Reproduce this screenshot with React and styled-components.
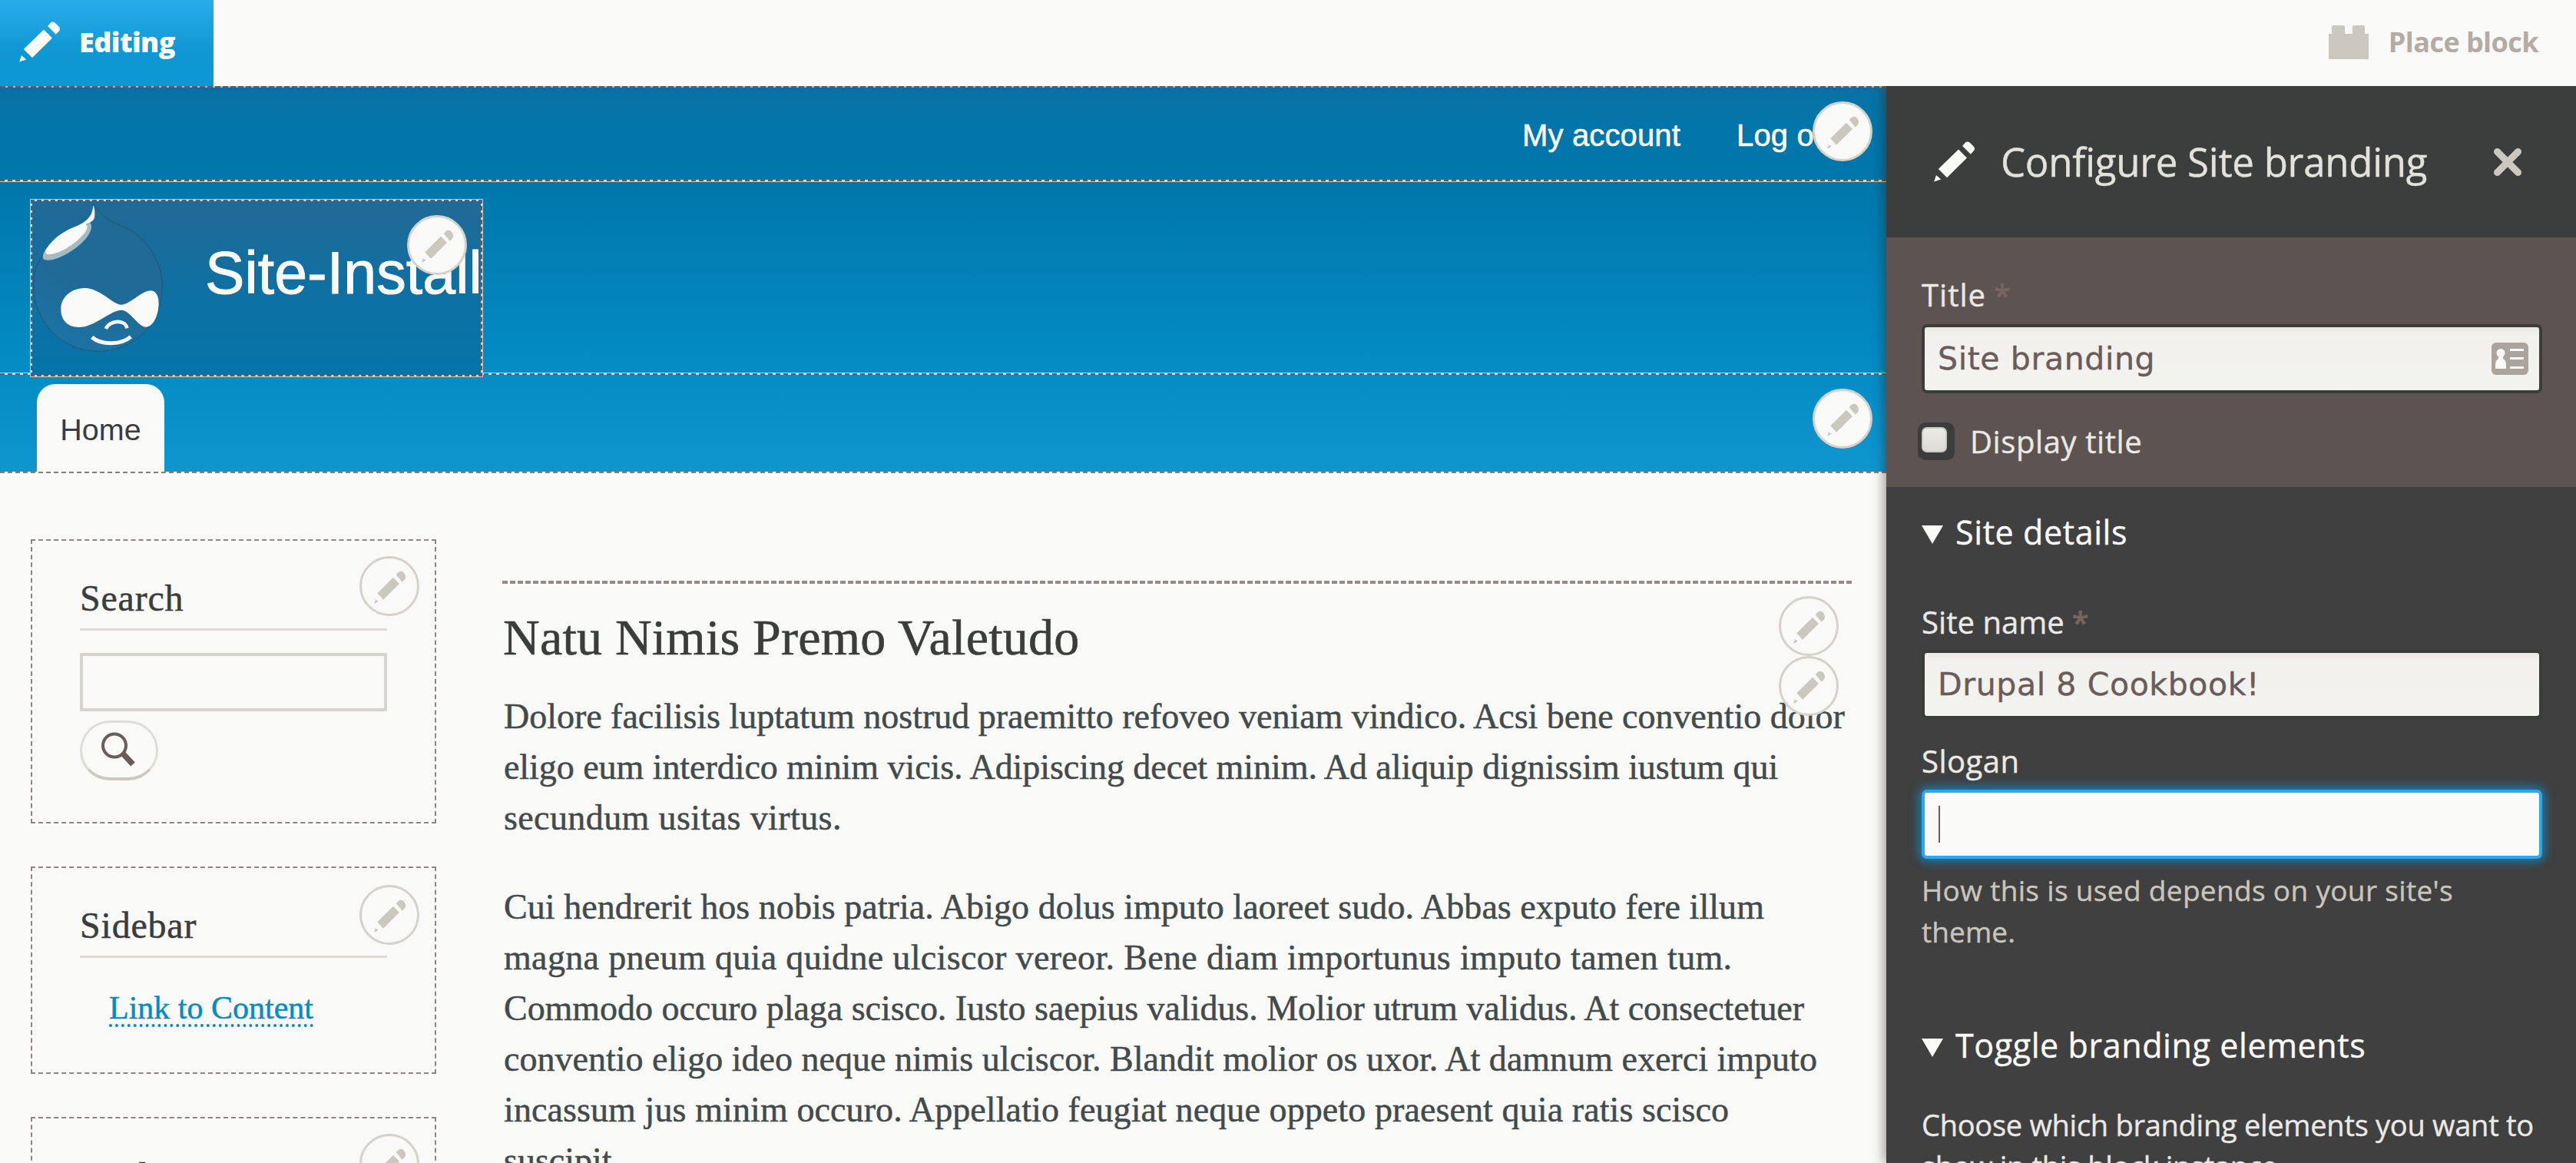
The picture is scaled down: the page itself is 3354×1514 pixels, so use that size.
import React from 'react';
import styled, { createGlobalStyle } from 'styled-components';

const paper = '#f9f9f7';
const stone = '#cbc8bf';
const coal = '#3b3d3c';
const umber = '#6a5c58';
const sans = '"Liberation Sans", Arial, sans-serif';
const serif = '"Liberation Serif", "Times New Roman", serif';
const ui = '"Open Sans", "Noto Sans", sans-serif';
const wide = '"DejaVu Sans", Verdana, sans-serif';

const Global = createGlobalStyle`
  *, *::before, *::after { box-sizing: border-box; }
  body { margin: 0; background: ${paper}; overflow: hidden; }
  h1, h2, h3, p { margin: 0; font-weight: 400; }
`;

const Page = styled.div`
  display: flex;
  flex-direction: column;
  width: 3354px;
  height: 1514px;
  overflow: hidden;
  background: ${paper};
`;

const Toolbar = styled.header`
  display: flex;
  justify-content: space-between;
  flex: none;
  height: 112px;
`;

const EditTab = styled.div`
  display: flex;
  align-items: center;
  gap: 23px;
  width: 278px;
  padding: 0 0 3px 24px;
  background: linear-gradient(#2aaceb, #0e97d3 60%, #0d98d5);
  color: ${paper};
`;

const ToolLabel = styled.span`
  font: 800 36px/50px ${ui};
  letter-spacing: -0.56px;
  white-space: nowrap;
`;

const PlaceBlock = styled.div`
  display: flex;
  align-items: center;
  gap: 26px;
  padding: 0 49px 3px 0;
  color: #b2aca4;
  ${ToolLabel} { font-weight: 700; }
`;

const Body = styled.div`
  display: flex;
  flex: 1;
  min-height: 0;
`;

const Site = styled.div`
  width: 2456px;
  flex: none;
`;

const SiteHeader = styled.div`
  background: linear-gradient(#17699a 0, #0972a5 10px, #0076aa 70px, #0077ab 130px, #038ac2 340px, #068ec7 400px, #1096cf 504px);
`;

const dash = 'repeating-linear-gradient(90deg, #655b58 0 6px, #d9d7d0 6px 10px)';

const AccountRegion = styled.div`
  position: relative;
  display: flex;
  flex-direction: column;
  height: 125px;
  &::before { content: ''; height: 2px; background: repeating-linear-gradient(90deg, #6a5c58 0 7px, #b6b0a8 7px 10px); }
  &::after { content: ''; height: 3px; background: ${dash} top / 100% 2px no-repeat, ${stone}; }
`;

const AccountMenu = styled.nav`
  flex: 1;
  display: flex;
  align-items: center;
  gap: 73px;
  padding: 4px 0 0 1982px;
  font: 40px/46px ${sans};
  color: ${paper};
  white-space: nowrap;
`;

const MenuLink = styled.span`
  letter-spacing: 0.15px;
  -webkit-text-stroke: 0.6px currentColor;
`;

const BrandRegion = styled.div`
  position: relative;
  height: 251px;
  padding: 22px 39px 0;
  background: ${dash} 0 249px / 100% 2px no-repeat, linear-gradient(${stone}, ${stone}) 0 248px / 100% 1px no-repeat;
`;

const BrandBox = styled.div`
  position: relative;
  display: flex;
  width: 590px;
  height: 232px;
  border: 3px dashed #655b58;
  outline: 1px solid ${stone};
  outline-offset: -1px;
  background: linear-gradient(#216995, #0f70a2 50%, #0474a8) padding-box, #d9d7d0 border-box;
  color: ${paper};
`;

const SiteName = styled.h1`
  padding: 50px 0 0 53px;
  font: 77px/86px ${sans};
  letter-spacing: 0.1px;
  white-space: nowrap;
  -webkit-text-stroke: 1px currentColor;
`;

const NavRegion = styled.div`
  position: relative;
  height: 128px;
  padding: 12px 48px 0;
  background: repeating-linear-gradient(90deg, #867d78 0 6px, ${paper} 6px 10px) bottom / 100% 2px no-repeat;
`;

const Tab = styled.div`
  display: flex;
  align-items: center;
  justify-content: center;
  width: 166px;
  height: 114px;
  padding-top: 4px;
  border-radius: 24px 24px 0 0;
  background: ${paper};
  color: ${coal};
  font: 39.5px/46px ${sans};
`;

const ChipRoot = styled.button`
  position: absolute;
  top: ${(p) => p.$top}px;
  left: ${(p) => p.$left}px;
  width: 78px;
  height: 78px;
  padding: 0;
  border: 3px solid #d4d2ca;
  border-radius: 50%;
  background: ${paper};
  color: ${stone};
  svg { display: block; margin: -3px; }
`;

const Content = styled.div`
  display: flex;
  padding-left: 40px;
`;

const Aside = styled.aside`
  display: flex;
  flex-direction: column;
  gap: 56px;
  width: 528px;
  padding-top: 86px;
`;

const Block = styled.section`
  position: relative;
  height: ${(p) => p.$height}px;
  padding: 45px 62px 0;
  border: 2px dashed #8d8580;
`;

const BlockTitle = styled.h2`
  padding-bottom: 9px;
  border-bottom: 3px solid #dddbd5;
  font: 48px/60px ${serif};
  letter-spacing: 0.8px;
  color: ${coal};
  -webkit-text-stroke: 0.5px currentColor;
`;

const SearchInput = styled.div`
  height: 76px;
  margin-top: 29px;
  border: 4px solid #d6d4cc;
`;

const SearchButton = styled.button`
  display: block;
  width: 102px;
  height: 78px;
  margin-top: 12px;
  padding: 0;
  border: 3px solid #dfddd7;
  border-bottom: 4px solid ${stone};
  border-radius: 39px;
  background: ${paper};
  svg { display: block; margin: -3px; }
`;

const ContentLink = styled.a`
  display: inline-block;
  margin: 44px 0 0 38px;
  border-bottom: 4px dotted #058cc4;
  font: 42px/42px ${serif};
  color: #058cc4;
  white-space: nowrap;
  -webkit-text-stroke: 0.5px currentColor;
`;

const Article = styled.main`
  position: relative;
  width: 1760px;
  margin-left: 86px;
  padding-top: 140px;
`;

const ArticleRule = styled.div`
  height: 4px;
  background: repeating-linear-gradient(90deg, #948b86 0 7px, ${paper} 7px 10px);
`;

const ArticleTitle = styled.h2`
  margin-top: 30px;
  padding-left: 1px;
  font: 66px/80px ${serif};
  letter-spacing: 0.22px;
  color: ${coal};
  -webkit-text-stroke: 0.6px currentColor;
`;

const Paragraph = styled.p`
  margin-top: ${(p) => p.$gap}px;
  padding-left: 2px;
  font: 46px/66px ${serif};
  color: #434a4c;
  -webkit-text-stroke: 0.5px currentColor;
`;

const Line = styled.span`
  display: block;
  width: max-content;
  letter-spacing: ${(p) => p.$track || 0}px;
  white-space: nowrap;
`;

const Tray = styled.aside`
  position: relative;
  display: flex;
  flex-direction: column;
  flex: 1;
  background: #3f403f;
  color: #eae9e5;
  font-family: ${ui};
  box-shadow: -3px 0 14px rgba(40, 30, 20, 0.45);
  clip-path: inset(0 0 0 -30px);
  -webkit-text-stroke: 0.4px currentColor;
`;

const TrayHeader = styled.div`
  display: flex;
  align-items: center;
  flex: none;
  height: 197px;
  padding: 0 70px 0 61px;
  background: #3c3e3d;
`;

const TrayTitle = styled.h2`
  flex: 1;
  padding: 0 0 2px 32px;
  font: 51px/70px ${ui};
  letter-spacing: -0.27px;
  color: #e3e1dc;
  white-space: nowrap;
`;

const TitleSection = styled.div`
  flex: none;
  height: 325px;
  padding: 48px 44px 0 46px;
  background: #5d5351;
`;

const DetailsSection = styled.div`
  flex: none;
  padding: 30px 44px 0 46px;
`;

const Label = styled.div`
  display: flex;
  gap: 10px;
  margin-top: ${(p) => p.$gap || 0}px;
  font: 40px/54px ${ui};
  letter-spacing: ${(p) => p.$track || 0}px;
  white-space: nowrap;
`;

const Required = styled.span`
  color: #77655f;
  letter-spacing: 0;
  font-weight: 600;
`;

const Field = styled.div`
  display: flex;
  align-items: center;
  height: 90px;
  margin-top: ${(p) => p.$gap}px;
  padding: 0 14px 0 17px;
  border: 4px solid ${(p) => (p.$focus ? '#2aaaea' : coal)};
  border-radius: 7px;
  background: ${(p) => (p.$focus ? paper : 'linear-gradient(#e9e7e2, #f1f0ed 8px, #f3f3f0)')};
  box-shadow: ${(p) => (p.$focus ? '0 0 12px 4px #1b78ab' : 'none')};
  color: ${umber};
  font: 41px/50px ${wide};
`;

const FieldText = styled.span`
  flex: 1;
  letter-spacing: 0.62px;
  white-space: nowrap;
`;

const Caret = styled.span`
  width: 2px;
  height: 48px;
  margin-left: 1px;
  background: ${umber};
`;

const CheckRow = styled.label`
  display: flex;
  align-items: center;
  gap: 20px;
  height: 49px;
  margin: 38px 0 0 -5px;
  font: 40px/49px ${ui};
  letter-spacing: 0.6px;
  white-space: nowrap;
`;

const CheckBox = styled.span`
  width: 48px;
  height: 49px;
  padding: 6px 10px 10px 5px;
  border-radius: 10px;
  background: ${coal};
  &::before {
    content: '';
    display: block;
    height: 33px;
    border-radius: 7px;
    border: 2px solid ${stone};
    background: linear-gradient(#eceae6, #dddbd5);
  }
`;

const Summary = styled.div`
  display: flex;
  align-items: center;
  gap: 16px;
  margin-top: ${(p) => p.$gap || 0}px;
  font: 43px/58px ${ui};
  letter-spacing: 0.6px;
  color: ${paper};
  white-space: nowrap;
  &::before {
    content: '';
    margin-top: 5px;
    border: 14px solid transparent;
    border-top: 24px solid ${paper};
    border-bottom: 0;
  }
`;

const Help = styled.p`
  margin-top: ${(p) => p.$gap}px;
  font: ${(p) => (p.$bright ? 38 : 37)}px/54px ${ui};
  color: ${(p) => (p.$bright ? '#eae9e5' : '#c8c5bd')};
`;

const Pencil = ({ size = 56 }) => (
  <svg width={size} height={size} viewBox="24 27 56 56" fill={paper}>
    <path d="M57 38.4 68 49.4 42 75.2 30.8 64ZM62 34 66 29.6Q68.5 27.4 71.5 29.4L76.6 34.4Q79 37.2 77.2 40L72.8 44.7ZM28 72 34.2 77.6 25.2 80.6Z" />
  </svg>
);

const Chip = ({ top, left }) => (
  <ChipRoot $top={top} $left={left} aria-label="Edit">
    <svg width="78" height="78" viewBox="0 0 234 234" fill="currentColor">
      <path d="M132 83 156 108 93 170 70 145ZM143 72 153 62Q163 56 172 63L178 72Q183 82 178 90L167 101ZM59 166 64 171 75 175 62 184 57 183 62 174Z" />
    </svg>
  </ChipRoot>
);

const LogoSvg = styled.svg`
  flex: none;
  margin-top: 3px;
`;

const Logo = () => (
  <LogoSvg width="172" height="194" viewBox="20 30 516 582">
    <defs>
      <linearGradient id="drop" x1="0.25" y1="0.5" x2="0.1" y2="0.85">
        <stop offset="0" stopColor="#1f6a96" />
        <stop offset="1" stopColor="#1b73a4" />
      </linearGradient>
    </defs>
    <path
      d="M258 32C275 50 290 80 325 98C350 112 375 118 400 132C480 178 528 270 528 358C528 500 415 607 277 607C138 607 25 495 25 345C25 300 38 262 60 235C110 150 180 130 235 100C255 80 260 55 258 32Z"
      fill="url(#drop)"
      stroke="#33454f"
      strokeWidth="2"
    />
    <path d="M245 104C256 112 250 135 240 152C210 200 115 260 70 250C55 246 60 228 75 205Z" fill="#a5bbc3" />
    <path
      d="M258 36C266 52 266 84 260 92C252 102 240 106 229 112C240 118 234 134 222 148C180 198 110 234 78 228C66 224 72 204 96 180C130 144 168 128 200 115C238 96 256 76 258 36Z"
      fill={paper}
    />
    <path
      d="M132 442C132 394 174 360 226 360C284 360 335 425 368 425C402 425 446 370 484 370C506 372 514 396 514 420C514 462 494 512 464 512C434 512 402 446 368 446C326 446 264 513 202 513C156 513 132 484 132 442Z"
      fill={paper}
    />
    <path d="M308 519C320 486 384 480 390 517" fill="none" stroke={paper} strokeWidth="14" />
    <path d="M253 552C290 584 368 582 405 550" fill="none" stroke={paper} strokeWidth="15" />
  </LogoSvg>
);

const BrickIcon = () => (
  <svg width="52" height="46" viewBox="0 0 52 46" fill={stone}>
    <path d="M0 12H4V3Q4 1 7 1H18Q21 1 21 3V12H31V3Q31 1 34 1H44Q47 1 47 3V12H52V45H0Z" />
  </svg>
);

const SearchIcon = () => (
  <svg width="102" height="78" viewBox="0 0 102 78" fill="none" stroke={umber}>
    <circle cx="45" cy="32.5" r="15" strokeWidth="4" />
    <path d="M56.5 43.5 69 57" strokeWidth="7.5" />
  </svg>
);

const CardIcon = () => (
  <svg width="48" height="42" viewBox="0 0 48 42">
    <rect width="48" height="42" rx="6" fill="#aba49c" />
    <g fill={paper}>
      <circle cx="12" cy="13.500" r="5.500" />
      <path d="M9 17H15V21Q19 23 19 29V34H5V29Q5 23 9 21Z" />
      <path d="M24 8H42V11H24ZM24 19H42V22H24ZM24 31H42V34H24Z" />
    </g>
  </svg>
);

const CloseIcon = () => (
  <svg width="38" height="38" viewBox="0 0 38 38" stroke={stone} strokeWidth="9" strokeLinecap="round">
    <path d="M5.500 5.500 32.500 32.500M32.500 5.500 5.500 32.500" />
  </svg>
);

export default function App() {
  return (
    <Page>
      <Global />
      <Toolbar>
        <EditTab>
          <Pencil />
          <ToolLabel>Editing</ToolLabel>
        </EditTab>
        <PlaceBlock>
          <BrickIcon />
          <ToolLabel>Place block</ToolLabel>
        </PlaceBlock>
      </Toolbar>
      <Body>
        <Site>
          <SiteHeader>
            <AccountRegion>
              <AccountMenu>
                <MenuLink>My account</MenuLink>
                <MenuLink>Log out</MenuLink>
              </AccountMenu>
              <Chip top={20} left={2360} />
            </AccountRegion>
            <BrandRegion>
              <BrandBox>
                <Logo />
                <SiteName>Site-Install</SiteName>
                <Chip top={18} left={488} />
              </BrandBox>
            </BrandRegion>
            <NavRegion>
              <Tab>Home</Tab>
              <Chip top={18} left={2360} />
            </NavRegion>
          </SiteHeader>
          <Content>
            <Aside>
              <Block $height={370}>
                <BlockTitle>Search</BlockTitle>
                <SearchInput />
                <SearchButton aria-label="Search">
                  <SearchIcon />
                </SearchButton>
                <Chip top={20} left={426} />
              </Block>
              <Block $height={270}>
                <BlockTitle>Sidebar</BlockTitle>
                <ContentLink>Link to Content</ContentLink>
                <Chip top={22} left={426} />
              </Block>
              <Block $height={270}>
                <BlockTitle>Tools</BlockTitle>
                <Chip top={20} left={426} />
              </Block>
            </Aside>
            <Article>
              <ArticleRule />
              <ArticleTitle>Natu Nimis Premo Valetudo</ArticleTitle>
              <Paragraph $gap={30}>
                <Line $track={-0.02}>Dolore facilisis luptatum nostrud praemitto refoveo veniam vindico. Acsi bene conventio dolor</Line>
                <Line $track={-0.05}>eligo eum interdico minim vicis. Adipiscing decet minim. Ad aliquip dignissim iustum qui</Line>
                <Line $track={0.4}>secundum usitas virtus.</Line>
              </Paragraph>
              <Paragraph $gap={50}>
                <Line $track={0.05}>Cui hendrerit hos nobis patria. Abigo dolus imputo laoreet sudo. Abbas exputo fere illum</Line>
                <Line $track={0.34}>magna pneum quia quidne ulciscor vereor. Bene diam importunus imputo tamen tum.</Line>
                <Line $track={-0.04}>Commodo occuro plaga scisco. Iusto saepius validus. Molior utrum validus. At consectetuer</Line>
                <Line $track={0.02}>conventio eligo ideo neque nimis ulciscor. Blandit molior os uxor. At damnum exerci imputo</Line>
                <Line $track={0.1}>incassum jus minim occuro. Appellatio feugiat neque oppeto praesent quia ratis scisco</Line>
                <Line>suscipit.</Line>
              </Paragraph>
              <Chip top={160} left={1662} />
              <Chip top={238} left={1662} />
            </Article>
          </Content>
        </Site>
        <Tray>
          <TrayHeader>
            <Pencil />
            <TrayTitle>Configure Site branding</TrayTitle>
            <CloseIcon />
          </TrayHeader>
          <TitleSection>
            <Label $track={1}>
              <span>Title</span>
              <Required>*</Required>
            </Label>
            <Field $gap={11}>
              <FieldText>Site branding</FieldText>
              <CardIcon />
            </Field>
            <CheckRow>
              <CheckBox />
              <span>Display title</span>
            </CheckRow>
          </TitleSection>
          <DetailsSection>
            <Summary>Site details</Summary>
            <Label $gap={61} $track={0.05}>
              <span>Site name</span>
              <Required>*</Required>
            </Label>
            <Field $gap={9}>
              <FieldText>Drupal 8 Cookbook!</FieldText>
            </Field>
            <Label $gap={28} $track={0.5}>Slogan</Label>
            <Field $gap={10} $focus>
              <Caret />
            </Field>
            <Help $gap={14}>
              <Line $track={0.33}>How this is used depends on your site's</Line>
              <Line $track={0.1}>theme.</Line>
            </Help>
            <Summary $gap={92}>Toggle branding elements</Summary>
            <Help $gap={47} $bright>
              <Line $track={-0.27}>Choose which branding elements you want to</Line>
              <Line $track={-0.35}>show in this block instance.</Line>
            </Help>
          </DetailsSection>
        </Tray>
      </Body>
    </Page>
  );
}
